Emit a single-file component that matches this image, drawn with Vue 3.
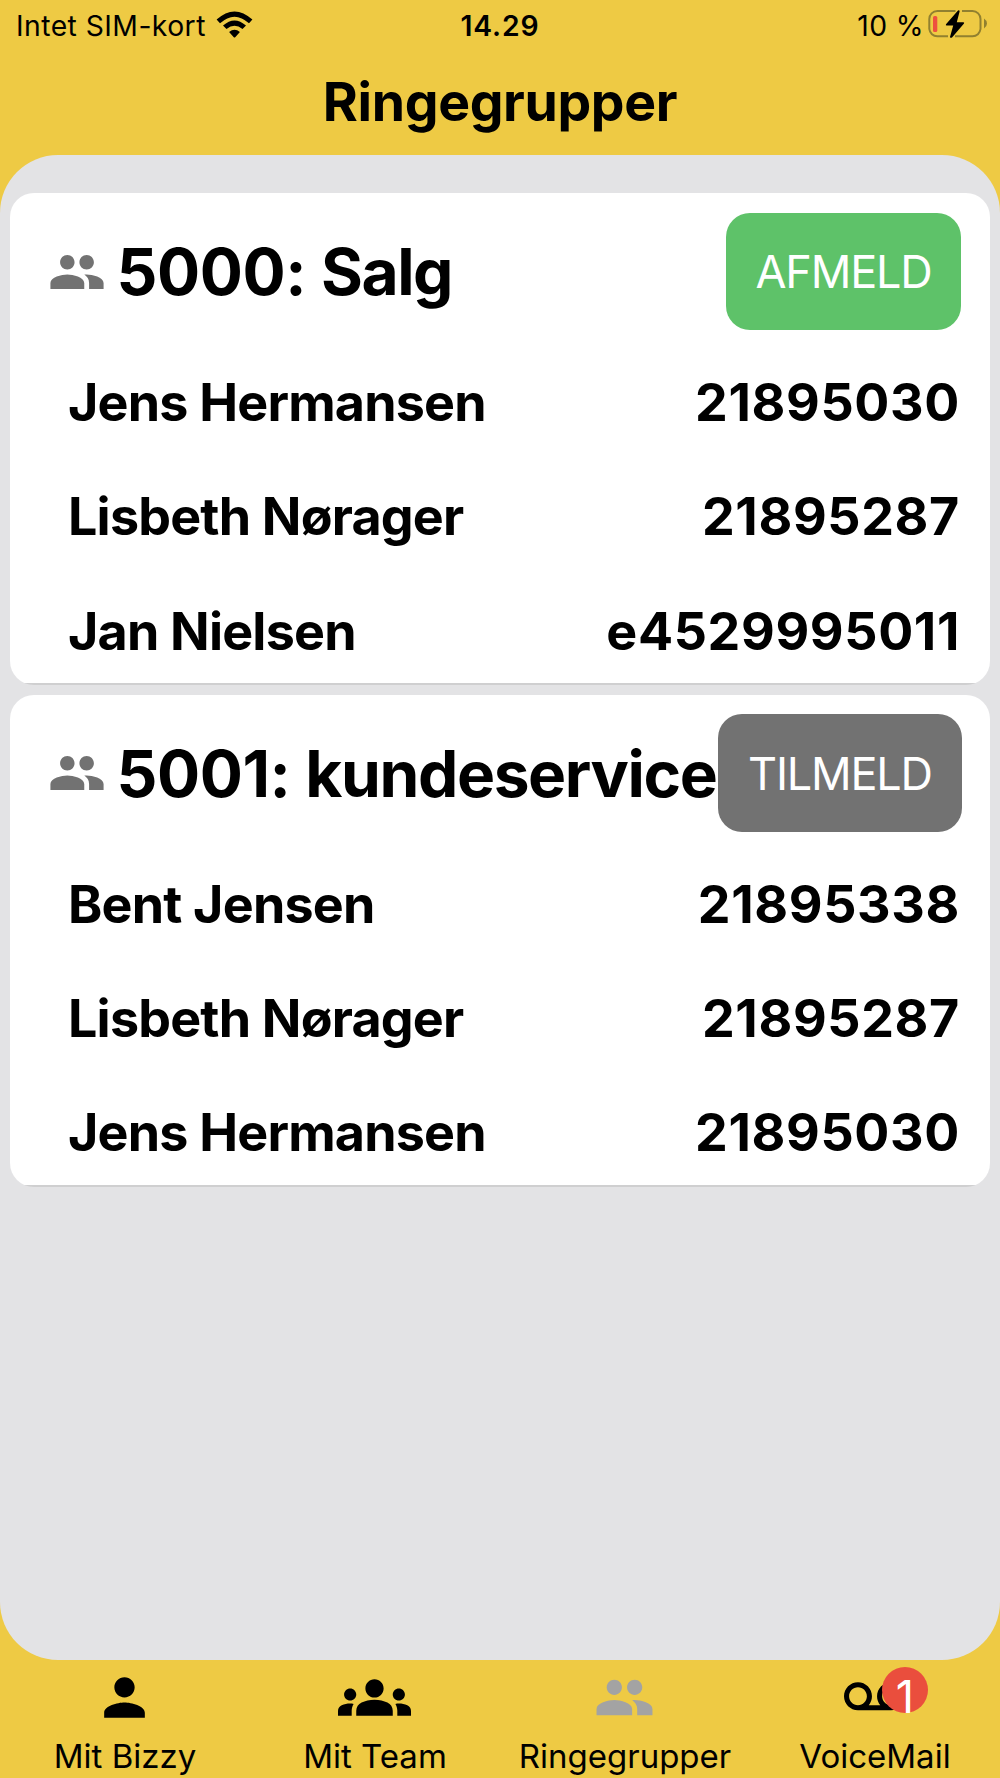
<script setup>
const groups = [
  {
    code: '5000:',
    title: 'Salg',
    action: 'AFMELD',
    kind: 'leave',
    members: [
      { name: 'Jens Hermansen', number: '21895030' },
      { name: 'Lisbeth Nørager', number: '21895287' },
      { name: 'Jan Nielsen', number: 'e4529995011' },
    ],
  },
  {
    code: '5001:',
    title: 'kundeservice',
    action: 'TILMELD',
    kind: 'join',
    members: [
      { name: 'Bent Jensen', number: '21895338' },
      { name: 'Lisbeth Nørager', number: '21895287' },
      { name: 'Jens Hermansen', number: '21895030' },
    ],
  },
]

const people =
  'M16 11c1.66 0 2.99-1.34 2.99-3S17.66 5 16 5c-1.66 0-3 1.34-3 3s1.34 3 3 3zm-8 0c1.66 0 2.99-1.34 2.99-3S9.66 5 8 5C6.34 5 5 6.34 5 8s1.34 3 3 3zm0 2c-2.33 0-7 1.17-7 3.5V19h14v-2.5c0-2.33-4.67-3.5-7-3.5zm8 0c-.29 0-.62.02-.97.05 1.16.84 1.97 1.97 1.97 3.45V19h6v-2.5c0-2.33-4.67-3.5-7-3.5z'

const tabs = [
  {
    label: 'Mit Bizzy',
    kind: 'bizzy',
    icon: 'M12 12c2.21 0 4-1.79 4-4s-1.79-4-4-4-4 1.79-4 4 1.79 4 4 4zm0 2c-2.67 0-8 1.34-8 4v2h16v-2c0-2.66-5.33-4-8-4z',
  },
  {
    label: 'Mit Team',
    kind: 'team',
    icon: 'M12 12.75c1.63 0 3.07.39 4.24.9 1.08.48 1.76 1.56 1.76 2.73V18H6v-1.61c0-1.18.68-2.26 1.76-2.73 1.17-.52 2.61-.91 4.24-.91zM4 13c1.1 0 2-.9 2-2s-.9-2-2-2-2 .9-2 2 .9 2 2 2zm1.13 1.1c-.37-.06-.74-.1-1.13-.1-.99 0-1.93.21-2.78.58C.48 14.9 0 15.62 0 16.43V18h4.5v-1.61c0-.83.23-1.61.63-2.29zM20 13c1.1 0 2-.9 2-2s-.9-2-2-2-2 .9-2 2 .9 2 2 2zm4 3.43c0-.81-.48-1.53-1.22-1.85-.85-.37-1.79-.58-2.78-.58-.39 0-.76.04-1.13.1.4.68.63 1.46.63 2.29V18H24v-1.57zM12 6c1.66 0 3 1.34 3 3s-1.34 3-3 3-3-1.34-3-3 1.34-3 3-3z',
  },
  { label: 'Ringegrupper', kind: 'groups', icon: people },
  {
    label: 'VoiceMail',
    kind: 'voicemail',
    badge: '1',
    icon: 'M18.5 6C15.46 6 13 8.46 13 11.5c0 1.33.47 2.55 1.26 3.5H9.74c.79-.95 1.26-2.17 1.26-3.5C11 8.46 8.54 6 5.5 6S0 8.46 0 11.5 2.46 17 5.5 17h13c3.04 0 5.5-2.46 5.5-5.5S21.54 6 18.5 6zm-13 9C3.57 15 2 13.43 2 11.5S3.57 8 5.5 8 9 9.57 9 11.5 7.43 15 5.5 15zm13 0c-1.93 0-3.5-1.57-3.5-3.5S16.57 8 18.5 8 22 9.57 22 11.5 20.43 15 18.5 15z',
  },
]
</script>

<template>
  <div class="screen">
    <header class="status">
      <div class="carrier">
        <span class="carrier-text">Intet SIM-kort</span>
        <svg class="wifi" viewBox="0 0 37 27">
          <path d="M0.6 8.6Q18.5-7.8 36.4 8.6L33 12.3Q18.5-1 4 12.3Z" />
          <path d="M7 14.6Q18.5 4.2 30 14.6L26.5 18.1Q18.5 11.3 10.5 18.1Z" />
          <path d="M13.1 21Q18.5 16.6 23.9 21L19.2 26.2Q18.5 27 17.8 26.2Z" />
        </svg>
      </div>
      <span class="clock">14.29</span>
      <div class="power">
        <span class="percent">10 %</span>
        <svg class="battery" viewBox="0 0 60 30">
          <g fill="none" stroke="#91802f" stroke-width="2">
            <path d="M27.5 2H9.3a8 8 0 0 0-8 8v10a8 8 0 0 0 8 7.2H20" />
            <path d="M34 2H44.5a8 8 0 0 1 8 8v10a8 8 0 0 1-8 7.2H27" />
          </g>
          <path d="M56 9.5q3 2 3 5t-3 5z" fill="#91802f" />
          <rect x="5" y="7" width="4.3" height="16" rx="1.6" fill="#ee503f" />
          <path
            d="M30 1.6 18 15.2Q17.3 16.5 18.8 16.5H25.2L22 28Q22.4 29.5 24 28.4L36 14.6Q36.7 13.2 35 13.2H28.8L31.6 2.4Q31.5.6 30 1.6Z"
          />
        </svg>
      </div>
    </header>

    <h1 class="title">Ringegrupper</h1>

    <main class="panel">
      <section v-for="group in groups" :key="group.title" class="card">
        <div class="card-head">
          <svg class="card-icon" viewBox="0 0 24 24"><path :d="people" /></svg>
          <h2 class="card-title">
            {{ group.code }} <span class="card-name">{{ group.title }}</span>
          </h2>
          <button class="action" :class="group.kind">{{ group.action }}</button>
        </div>
        <ul class="members">
          <li v-for="member in group.members" :key="member.name" class="member">
            <span class="name">{{ member.name }}</span>
            <span class="number">{{ member.number }}</span>
          </li>
        </ul>
      </section>
    </main>

    <nav class="tabs">
      <a v-for="tab in tabs" :key="tab.label" class="tab" :class="tab.kind">
        <span class="tab-icon">
          <svg viewBox="0 0 24 24"><path :d="tab.icon" /></svg>
          <span v-if="tab.badge" class="badge">{{ tab.badge }}</span>
        </span>
        <span class="tab-label">{{ tab.label }}</span>
      </a>
    </nav>
  </div>
</template>

<style>
body {
  margin: 0;
}
</style>

<style scoped>
.screen {
  display: flex;
  flex-direction: column;
  width: 1000px;
  height: 1778px;
  overflow: hidden;
  background: #eeca44;
  color: #000;
  font-family: Inter, "Liberation Sans", sans-serif;
}
.status {
  display: grid;
  grid-template-columns: 1fr auto 1fr;
  align-items: center;
  flex: none;
  height: 51px;
  padding: 0 12px 0 16px;
  font-size: 28.3px;
  line-height: 34px;
}
.carrier,
.power {
  display: flex;
  align-items: center;
}
.carrier-text {
  letter-spacing: 0.45px;
}
.wifi {
  width: 37px;
  height: 27px;
  margin: -3px 0 0 10px;
}
.clock {
  margin-left: -4px;
  font-weight: 600;
  letter-spacing: 0.9px;
}
.power {
  justify-content: flex-end;
}
.percent {
  letter-spacing: 0.4px;
}
.battery {
  width: 60px;
  height: 30px;
  margin: -3px 0 0 4px;
}
.title {
  flex: none;
  height: 104px;
  margin: 0;
  font-size: 53.5px;
  line-height: 101px;
  font-weight: 700;
  letter-spacing: -0.35px;
  text-align: center;
}
.panel {
  display: flex;
  flex-direction: column;
  gap: 9.7px;
  flex: none;
  box-sizing: border-box;
  height: 1504.5px;
  padding: 38px 10px 0;
  border-radius: 58px;
  background: #e3e3e5;
}
.card {
  flex: none;
  height: 492px;
  border-radius: 24px;
  background: linear-gradient(#fff 490px, #cfcfd0 490px);
}
.card-head {
  display: flex;
  align-items: center;
  height: 157px;
  padding: 0 28px 0 38.4px;
}
.card-icon {
  flex: none;
  width: 58px;
  height: 58px;
  fill: #727272;
}
.card-title {
  width: 0;
  margin: 0 0 0 10px;
  font-size: 64px;
  font-weight: 700;
  letter-spacing: -0.4px;
  white-space: nowrap;
}
.card-name {
  letter-spacing: -1.4px;
}
.action {
  flex: none;
  width: 244px;
  height: 117.5px;
  margin-left: auto;
  padding: 0;
  border: 0;
  border-radius: 24px;
  background: #727272;
  color: #fff;
  font: 400 45px Inter, "Liberation Sans", sans-serif;
  letter-spacing: -1.2px;
}
.action.leave {
  width: 235px;
  margin-right: 1px;
  background: #5ec269;
}
.members {
  display: flex;
  flex-direction: column;
  gap: 10.4px;
  margin: 0;
  padding: 1px 30px 0 58px;
  list-style: none;
}
.member {
  display: flex;
  justify-content: space-between;
  font-size: 52px;
  font-weight: 700;
  line-height: 104px;
}
.name {
  letter-spacing: -0.8px;
}
.number {
  letter-spacing: 0.65px;
}
.tabs {
  display: grid;
  grid-template-columns: repeat(4, 1fr);
  flex: 1;
}
.tab {
  display: flex;
  flex-direction: column;
  align-items: center;
}
.tab-icon {
  position: relative;
  display: flex;
  align-items: center;
  justify-content: center;
  width: 61px;
  height: 76px;
  margin-right: 1px;
}
.tab svg {
  flex: none;
  width: 61px;
  height: 61px;
}
.team svg {
  width: 73px;
  height: 73px;
}
.groups svg {
  fill: #a3a3a3;
}
.badge {
  position: absolute;
  top: 7.5px;
  left: 38px;
  width: 46px;
  height: 46px;
  border-radius: 50%;
  background: #ea4e3d;
  color: #fff;
  font-size: 45px;
  line-height: 59px;
  text-align: center;
}
.tab-label {
  font-size: 33px;
  line-height: 40px;
}
</style>
